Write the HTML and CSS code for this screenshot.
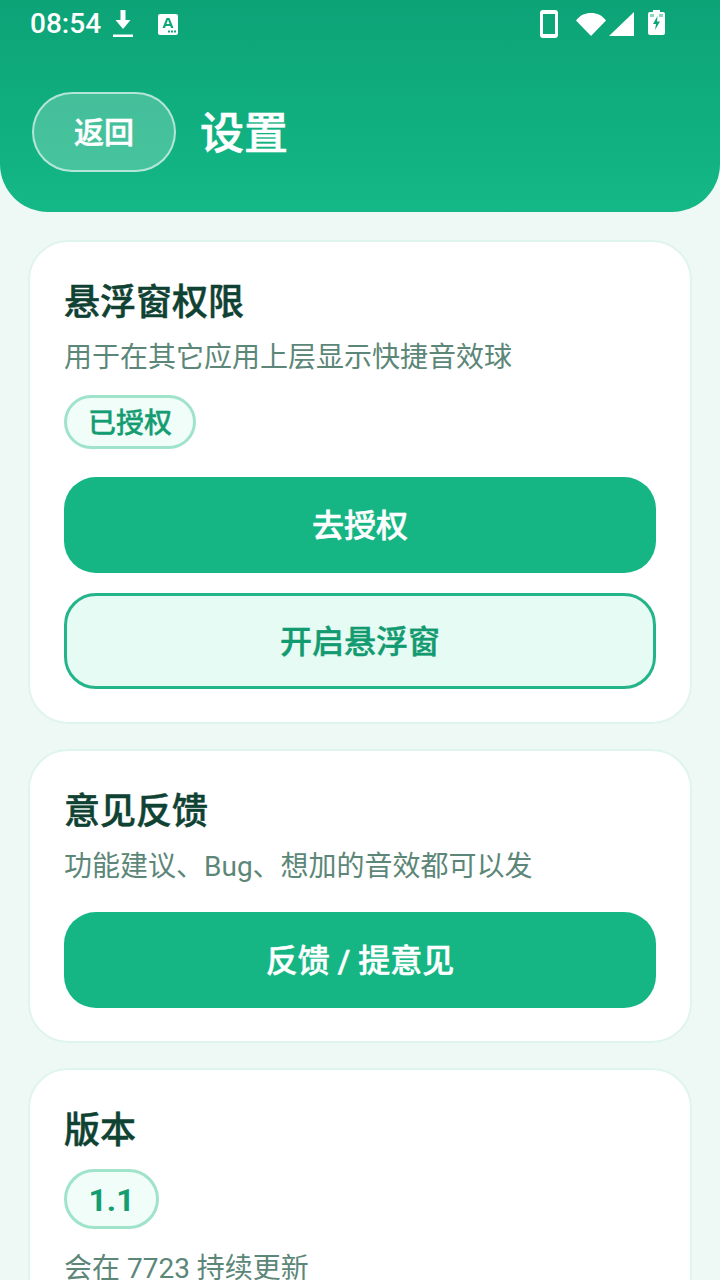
FILE: index.html
```html
<!DOCTYPE html>
<html lang="zh-CN">
<head>
<meta charset="utf-8">
<title>设置</title>
<link rel="stylesheet" href="styles.css">
</head>
<body>
<div class="page">
  <header class="header">
    <div class="statusbar">
      <div class="status-left">
        <span class="clock">08:54</span>
        <svg class="ic-download" viewBox="0 0 20 27"><path d="M7.500 0h5v10h5L10 19 2.500 10h5z" fill="#fff"/><rect x="0" y="24.500" width="20" height="2.500" fill="#fff"/></svg>
        <svg class="ic-a" viewBox="0 0 20 21"><rect width="20" height="21" rx="2" fill="#fff"/><path d="M8.500 4h3L15.500 14H13l-.7-2H7.700L7 14H4.500zM8.400 10h3.200L10 5.800z" fill="#0ea678" fill-rule="evenodd"/><rect x="10" y="16.500" width="2" height="2" fill="#0ea678"/><rect x="13" y="16.500" width="2" height="2" fill="#0ea678"/><rect x="16" y="16.500" width="2" height="2" fill="#0ea678"/></svg>
      </div>
      <div class="status-right">
        <svg class="ic-phone" viewBox="0 0 18 28"><path d="M3 0h12a3 3 0 0 1 3 3v22a3 3 0 0 1-3 3H3a3 3 0 0 1-3-3V3a3 3 0 0 1 3-3zm0 4v20h12V4z" fill="#fff" fill-rule="evenodd"/></svg>
        <svg class="ic-wifi" viewBox="0 0 30 24"><path d="M0 8.500C3.800 3.300 9 1 15 1s11.200 2.300 15 7.500L15 24z" fill="#fff"/></svg>
        <svg class="ic-signal" viewBox="0 0 25 24"><path d="M25 0v24H0z" fill="#fff"/></svg>
        <svg class="ic-battery" viewBox="0 0 17 25"><path d="M5 0h7v2h3a2 2 0 0 1 2 2v19a2 2 0 0 1-2 2H2a2 2 0 0 1-2-2V4a2 2 0 0 1 2-2h3z" fill="#fff"/><rect x="2" y="4" width="4" height="3" fill="#8ad8bd"/><rect x="11" y="4" width="4" height="3" fill="#8ad8bd"/><path d="M9.500 6 5 14h3l-1 6 5-8.500H9z" fill="#0ea678"/></svg>
      </div>
    </div>
    <div class="toolbar">
      <button class="back">返回</button>
      <h1 class="page-title">设置</h1>
    </div>
  </header>
  <main class="content">
    <section class="card">
      <h2 class="card-title">悬浮窗权限</h2>
      <p class="card-sub">用于在其它应用上层显示快捷音效球</p>
      <span class="badge">已授权</span>
      <button class="btn btn-primary btn-first">去授权</button>
      <button class="btn btn-outline">开启悬浮窗</button>
    </section>
    <section class="card">
      <h2 class="card-title">意见反馈</h2>
      <p class="card-sub">功能建议、Bug、想加的音效都可以发</p>
      <button class="btn btn-primary btn-feedback">反馈 / 提意见</button>
    </section>
    <section class="card">
      <h2 class="card-title">版本</h2>
      <span class="badge badge-version">1.1</span>
      <p class="card-sub card-note">会在 7723 持续更新</p>
    </section>
  </main>
</div>
</body>
</html>
```
FILE: styles.css
```css
* { box-sizing: border-box; margin: 0; padding: 0; }
html, body { height: 100%; overflow: hidden; }
body {
  background: #eef9f5;
  font-family: Roboto, "Noto Sans CJK SC", sans-serif;
}
.page { height: 1280px; overflow: hidden; }
.header {
  height: 212px;
  background: linear-gradient(180deg, #0ca377 0%, #14b886 100%);
  border-radius: 0 0 48px 48px;
  color: #fff;
}
.statusbar {
  height: 48px;
  display: flex;
  justify-content: space-between;
  align-items: flex-start;
  padding: 10px 55px 0 30px;
}
.status-left, .status-right { display: flex; align-items: flex-start; }
.clock { font-size: 28px; line-height: 28px; font-weight: 500; color: #fff; width: 83px; }
.ic-download { width: 20px; height: 27px; margin-right: 25px; }
.ic-a { width: 20px; height: 21px; margin-top: 4px; }
.ic-phone { width: 18px; height: 28px; margin-right: 18px; }
.ic-wifi { width: 30px; height: 24px; margin: 2px 3px 0 0; }
.ic-signal { width: 25px; height: 24px; margin: 2px 14px 0 0; }
.ic-battery { width: 17px; height: 25px; }
.toolbar {
  display: flex;
  align-items: center;
  gap: 24px;
  padding: 44px 32px 0;
}
.back {
  width: 144px;
  height: 80px;
  padding-bottom: 4px;
  border-radius: 40px;
  border: 2px solid rgba(255,255,255,0.6);
  background: rgba(255,255,255,0.22);
  color: #fff;
  font: 500 30px "Noto Sans CJK SC", sans-serif;
  -webkit-text-stroke: 0.5px #fff;
}
.page-title {
  font: 500 44px/1.2 "Noto Sans CJK SC", sans-serif;
  color: #fff;
  margin-bottom: 4px;
  -webkit-text-stroke: 0.6px #fff;
}
.content { display: flex; flex-direction: column; gap: 25px; padding: 28px 28px 0; }
.card {
  display: flex;
  flex-direction: column;
  align-items: flex-start;
  background: #fff;
  border: 2px solid #dff5ec;
  border-radius: 40px;
  padding: 34px 34px 33px;
}
.card-title {
  font: 500 36px/46px "Noto Sans CJK SC", sans-serif;
  color: #0f4233;
  -webkit-text-stroke: 0.5px #0f4233;
}
.card-sub { font: 400 28px/40px Roboto, "Noto Sans CJK SC", sans-serif; color: #5c8778; margin-top: 16px; }
.badge {
  display: inline-block;
  height: 54px;
  margin-top: 17px;
  padding: 0 21px;
  border: 3px solid #a0e3cb;
  border-radius: 27px;
  background: #f1fdf8;
  color: #149c72;
  font: 500 28px/52px Roboto, "Noto Sans CJK SC", sans-serif;
  -webkit-text-stroke: 0.3px #149c72;
}
.btn {
  display: block;
  width: 100%;
  height: 96px;
  padding-bottom: 4px;
  border-radius: 32px;
  font: 500 32px Roboto, "Noto Sans CJK SC", sans-serif;
}
.btn-primary { background: #16b584; border: 0; color: #fff; -webkit-text-stroke: 0.5px #fff; }
.btn-outline { background: #e6fbf3; border: 3px solid #24b48a; color: #129a70; margin-top: 20px; -webkit-text-stroke: 0.4px #129a70; }
.btn-first { margin-top: 28px; }
.btn-feedback { margin-top: 25px; }
.badge-version {
  height: 60px;
  padding: 0 21.500px;
  font-size: 32px;
  font-weight: 700;
  line-height: 56px;
  margin-top: 19px;
  border-radius: 30px;
  -webkit-text-stroke: 0;
}
.card-note { margin-top: 20px; }
```
